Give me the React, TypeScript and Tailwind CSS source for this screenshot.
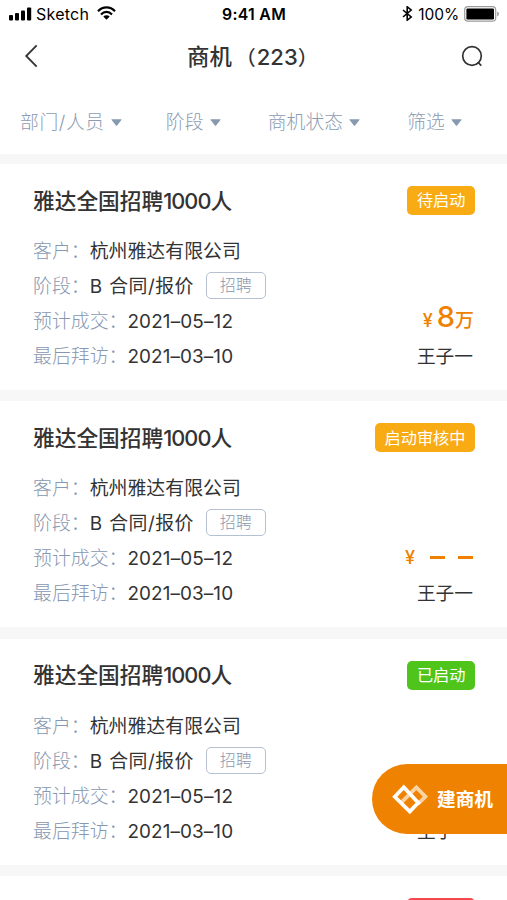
import { clsx } from "clsx";

type Deal = {
  status: string;
  tone: "amber" | "green" | "red";
  amount?: string;
};

const filters = [
  { label: "部门/人员", gap: "mr-[44px] tracking-[0.6px]" },
  { label: "阶段", gap: "mr-[47px] tracking-[0.2px]" },
  { label: "商机状态", gap: "mr-[47px] tracking-[0.1px]" },
  { label: "筛选", gap: "" },
];

const deals: Deal[] = [
  { status: "待启动", tone: "amber", amount: "8" },
  { status: "启动审核中", tone: "amber" },
  { status: "已启动", tone: "green", amount: "8" },
  { status: "已关闭", tone: "red", amount: "8" },
];

const tones = {
  amber: "bg-[#f9ab14]",
  green: "bg-[#4fc41a]",
  red: "bg-[#f5484b]",
};

function StatusBar() {
  return (
    <div className="flex h-7 items-center justify-between pr-[7px] pl-[9px] text-black">
      <div className="flex flex-1 items-center">
        <svg width="23" height="14" viewBox="0 0 23 14">
          <rect x="0" y="8" width="4" height="5.5" rx="1" />
          <rect x="6" y="6" width="4" height="7.5" rx="1" />
          <rect x="12" y="3.5" width="4" height="10" rx="1" />
          <rect x="18" y="0.5" width="4.2" height="13" rx="1" />
        </svg>
        <span className="ml-1 text-[16px] tracking-[0.25px]">Sketch</span>
        <svg className="-mt-0.5 ml-2" width="19" height="14" viewBox="0 0 19 14" fill="none" stroke="black" strokeWidth="2.2">
          <path d="M1 5.2C5.9.1 13.1.1 18 5.2" />
          <path d="M4 8.4c3.2-3.3 7.8-3.3 11 0" />
          <path d="M6.3 10.6 9.5 13.8l3.2-3.2c-1.8-1.7-4.6-1.7-6.4 0Z" fill="black" stroke="none" />
        </svg>
      </div>
      <span className="-ml-px pt-px text-[15.8px] font-semibold tracking-[0.3px]">9:41 AM</span>
      <div className="flex flex-1 items-center justify-end">
        <svg className="-mt-0.5" width="11" height="15" viewBox="0 0 11 15" fill="none" stroke="black" strokeWidth="1.6">
          <path d="m1 4 8.2 7-4 3.2V.8l4 3.2L1 11" />
        </svg>
        <span className="ml-[5px] pt-px text-[15.5px] tracking-[-0.1px]">100%</span>
        <svg className="-mt-px ml-[5px]" width="36" height="16" viewBox="0 0 36 16">
          <rect x="0.7" y="0.7" width="31" height="14.4" rx="3.2" fill="none" stroke="#9b9b9b" strokeWidth="1.2" />
          <rect x="2.4" y="2.4" width="27.6" height="11" rx="1.2" />
          <path d="M33.2 5.4c2.3.8 2.3 4.2 0 5Z" fill="#9b9b9b" />
        </svg>
      </div>
    </div>
  );
}

function NavBar() {
  return (
    <div className="flex h-14 items-center pr-[23px] pl-[23px] text-[#333]">
      <svg width="24" height="24" viewBox="0 0 24 24" fill="none" stroke="currentColor" strokeWidth="1.8">
        <path d="M13.7 1.4 3.2 12l10.5 10.6" />
      </svg>
      <h1 className="mt-0.5 ml-[140px] flex items-baseline text-[22.4px] leading-none font-medium whitespace-nowrap">
        商机<span className="ml-1 text-[20px]">（</span>
        <span className="ml-px text-[22px]">223</span>
        <span className="text-[20px]">）</span>
      </h1>
      <svg className="ml-auto" width="24" height="24" viewBox="0 0 24 24" fill="none" stroke="currentColor" strokeWidth="1.7">
        <circle cx="12" cy="12" r="9.3" />
        <path d="m17.7 18 3.6 3.7" />
      </svg>
    </div>
  );
}

function FilterBar() {
  return (
    <div className="flex h-[70px] items-center pt-2 pl-5 text-[18.8px] font-light text-[#8d9cb3]">
      {filters.map((f) => (
        <button key={f.label} className={clsx("flex items-center whitespace-nowrap", f.gap)}>
          {f.label}
          <svg className="-mt-px ml-1.5" width="11" height="7" viewBox="0 0 11 7" fill="#8799af">
            <path d="M.8.3h9.4q.6.2.2.8L6.1 6.4q-.6.6-1.2 0L.6 1.1Q.2.5.8.3Z" />
          </svg>
        </button>
      ))}
    </div>
  );
}

function Label({ children }: { children: string }) {
  return <span className="font-light text-[#8797b0]">{children}：</span>;
}

function DealCard({ deal }: { deal: Deal }) {
  return (
    <article className="h-[226px] shrink-0 bg-white pt-[22px] pr-8 pl-[33px] text-[#333]">
      <div className="flex h-[29px] items-center justify-between">
        <h2 className="pt-px text-[21.7px] font-medium">
          雅达全国招聘<span className="tracking-[-0.9px]">1000</span>人
        </h2>
        <span className={clsx("flex h-[29px] items-center rounded-[5px] px-[9.5px] text-[16.2px] text-white", tones[deal.tone])}>
          {deal.status}
        </span>
      </div>
      <div className="mt-[19px] text-[18.9px] leading-[35px]">
        <div className="flex h-[35px]">
          <Label>客户</Label>杭州雅达有限公司
        </div>
        <div className="flex h-[35px] items-center">
          <Label>阶段</Label>
          <span className="tracking-[0.45px] [word-spacing:1px]">B 合同/报价</span>
          <span className="-mt-0.5 ml-3 flex h-[27px] w-[60px] items-center justify-center rounded-[5px] border border-[#b4c0d0] text-[16px] font-light text-[#8797b0]">
            招聘
          </span>
        </div>
        <div className="flex h-[35px] justify-between">
          <div className="flex">
            <Label>预计成交</Label>
            <span className="tracking-[0.15px]">2021–05–12</span>
          </div>
          <div className="flex items-baseline pr-px font-medium text-[#ee8100]">
            {deal.amount ? (
              <div className="-mt-[5px] flex items-baseline">
                <span className="text-[18px]">¥</span>
                <span className="ml-1 text-[29px]">{deal.amount}</span>
                <span>万</span>
              </div>
            ) : (
              <>
                <span className="-mt-px text-[18px]">¥</span>
                <span className="mr-px mb-[3px] ml-[15px] flex gap-[13px] self-center">
                  <i className="h-[3px] w-[15px] bg-[#ee8100]" />
                  <i className="h-[3px] w-[15px] bg-[#ee8100]" />
                </span>
              </>
            )}
          </div>
        </div>
        <div className="flex h-[35px] justify-between">
          <div className="flex">
            <Label>最后拜访</Label>
            <span className="tracking-[0.1px]">2021–03–10</span>
          </div>
          <span className="pr-0.5 text-[18.7px]">王子一</span>
        </div>
      </div>
    </article>
  );
}

export default function App() {
  return (
    <div className="relative h-[900px] w-[507px] overflow-hidden bg-[#f7f7f7] font-['Inter','Noto_Sans_CJK_SC',sans-serif]" lang="zh-CN">
      <header className="bg-white">
        <StatusBar />
        <NavBar />
        <FilterBar />
      </header>
      <main className="mt-2.5 flex flex-col gap-[11.3px]">
        {deals.map((d) => (
          <DealCard key={d.status} deal={d} />
        ))}
      </main>

      {/* Botón flotante */}
      <button className="absolute top-[764px] right-0 flex h-[70px] w-[135px] items-center rounded-l-full bg-[#ef8200] pl-5 text-white">
        <svg width="36" height="31" viewBox="0 0 36 31" fill="none" strokeWidth="3.8">
          <path d="M10.2 17.6 24.4 3.4l9 9.2-7.4 7.4" stroke="#fbd3a0" />
          <path d="M11.8 3.2 2.8 12.8l15 14.8 8.4-8.8Z" stroke="white" />
        </svg>
        <span className="mt-0.5 ml-[9px] text-[18.7px] font-bold whitespace-nowrap">建商机</span>
      </button>
    </div>
  );
}
